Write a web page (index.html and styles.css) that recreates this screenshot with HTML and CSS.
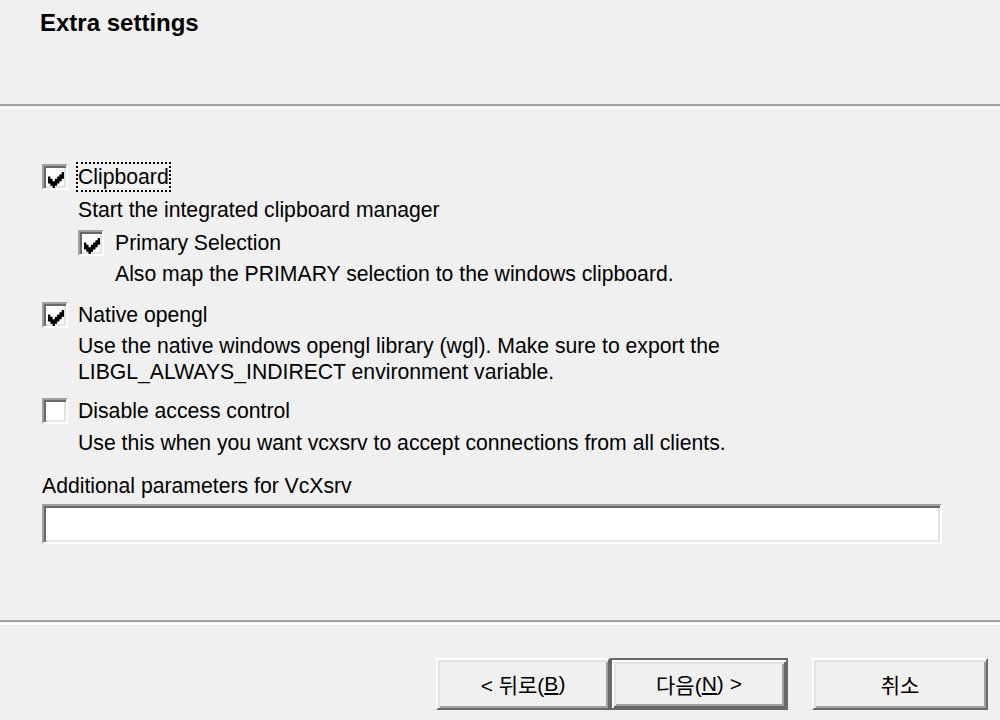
FILE: index.html
```html
<!DOCTYPE html>
<html>
<head>
<meta charset="utf-8">
<link rel="stylesheet" href="styles.css">
</head>
<body>
<div class="dialog">
  <div class="header">
    <div class="title">Extra settings</div>
  </div>
  <div class="sep"></div>
  <div class="content">
    <div class="row first">
      <span class="cb checked"><svg width="16" height="16" viewBox="0 0 14 14"><path d="M12 0h2v2h-2zM10 2h4v2h-4zM0 4h2v2h-2zM8 4h6v2h-6zM0 6h4v2h-4zM6 6h6v2h-6zM0 8h10v2h-10zM2 10h6v2h-6zM4 12h2v2h-2z" fill="#000"/></svg></span>
      <span class="label focus">Clipboard</span>
    </div>
    <div class="desc d1">Start the integrated clipboard manager</div>
    <div class="sub">
      <div class="row r2">
        <span class="cb checked"><svg width="16" height="16" viewBox="0 0 14 14"><path d="M12 0h2v2h-2zM10 2h4v2h-4zM0 4h2v2h-2zM8 4h6v2h-6zM0 6h4v2h-4zM6 6h6v2h-6zM0 8h10v2h-10zM2 10h6v2h-6zM4 12h2v2h-2z" fill="#000"/></svg></span>
        <span class="label sublabel">Primary Selection</span>
      </div>
      <div class="desc subdesc d2">Also map the PRIMARY selection to the windows clipboard.</div>
    </div>
    <div class="row r3">
      <span class="cb checked"><svg width="16" height="16" viewBox="0 0 14 14"><path d="M12 0h2v2h-2zM10 2h4v2h-4zM0 4h2v2h-2zM8 4h6v2h-6zM0 6h4v2h-4zM6 6h6v2h-6zM0 8h10v2h-10zM2 10h6v2h-6zM4 12h2v2h-2z" fill="#000"/></svg></span>
      <span class="label">Native opengl</span>
    </div>
    <div class="desc d3">Use the native windows opengl library (wgl). Make sure to export the<br>LIBGL_ALWAYS_INDIRECT environment variable.</div>
    <div class="row r4">
      <span class="cb"></span>
      <span class="label">Disable access control</span>
    </div>
    <div class="desc d4">Use this when you want vcxsrv to accept connections from all clients.</div>
    <div class="param-label">Additional parameters for VcXsrv</div>
    <div class="input"></div>
  </div>
  <div class="sep sep2"></div>
  <div class="buttons">
    <div class="btn">&lt; 뒤로(<u>B</u>)</div>
    <div class="btn default">다음(<u>N</u>) &gt;</div>
    <div class="btn cancel">취소</div>
  </div>
</div>
</body>
</html>
```

FILE: styles.css
```css
html, body {
  margin: 0;
  padding: 0;
  background: #f0f0f0;
}
body {
  font-family: "Liberation Sans", Arial, "Noto Sans CJK KR", sans-serif;
  font-size: 21.2px;
  color: #000;
}
.dialog {
  width: 1000px;
  height: 720px;
  overflow: hidden;
}
.header {
  height: 104px;
  box-sizing: border-box;
  padding: 9px 0 0 40px;
}
.title {
  font-weight: bold;
  font-size: 24px;
  line-height: 28px;
}
.sep {
  height: 1px;
  border-top: 2px solid #a0a0a0;
  border-bottom: 2px solid #ffffff;
}
.content {
  padding-left: 42px;
}
.row {
  display: flex;
  align-items: center;
}
.row.first { margin-top: 53px; }
.row.r2 { margin-top: 7px; }
.row.r3 { margin-top: 15px; }
.row.r4 { margin-top: 13px; }
.cb {
  width: 26px;
  height: 26px;
  box-sizing: border-box;
  background: #fff;
  border-style: solid;
  border-width: 2px;
  border-color: #a0a0a0 #ffffff #ffffff #a0a0a0;
  box-shadow: inset 2px 2px #696969, inset -2px -2px #e3e3e3;
  display: flex;
  align-items: flex-start;
  justify-content: flex-start;
  flex-shrink: 0;
}
.cb svg {
  margin: 6px 0 0 4px;
  display: block;
}
.label {
  line-height: 26px;
  margin-left: 10px;
  white-space: nowrap;
}
.label.focus {
  margin-left: 8px;
  border: 2px dotted #000;
  padding: 0 0 0 0;
}
.label.sublabel {
  margin-left: 11px;
}
.desc {
  line-height: 26px;
  margin-left: 36px;
  white-space: nowrap;
}
.d1 { margin-top: 5px; }
.sub { margin-left: 36px; }
.subdesc { margin-left: 37px; }
.d2 { margin-top: 5px; }
.d3 { margin-top: 5px; }
.d4 { margin-top: 6px; }
.param-label {
  line-height: 26px;
  margin-top: 17px;
}
.input {
  margin-top: 5px;
  width: 900px;
  height: 40px;
  box-sizing: border-box;
  background: #fff;
  border-style: solid;
  border-width: 2px;
  border-color: #a0a0a0 #ffffff #ffffff #a0a0a0;
  box-shadow: inset 2px 2px #696969, inset -2px -2px #e3e3e3;
}
.sep2 {
  margin-top: 76px;
}
.buttons {
  display: flex;
  justify-content: flex-end;
  padding-right: 12px;
  margin-top: 33px;
}
.btn {
  height: 52px;
  width: 174px;
  box-sizing: border-box;
  border-style: solid;
  border-width: 2px;
  border-color: #ffffff #696969 #696969 #ffffff;
  box-shadow: inset 2px 2px #e3e3e3, inset -2px -2px #a0a0a0;
  display: flex;
  align-items: center;
  justify-content: center;
  font-family: "Liberation Sans", Arial, "Noto Sans CJK KR", sans-serif;
  font-size: 21px;
  white-space: nowrap;
}
.btn u {
  text-underline-offset: 2px;
}
.btn.default {
  width: 178px;
  border: 2px solid #696969;
  box-shadow: inset 2px 2px #ffffff, inset -2px -2px #696969, inset 4px 4px #e3e3e3, inset -4px -4px #a0a0a0;
}
.btn.cancel {
  width: 176px;
  margin-left: 24px;
}
```
